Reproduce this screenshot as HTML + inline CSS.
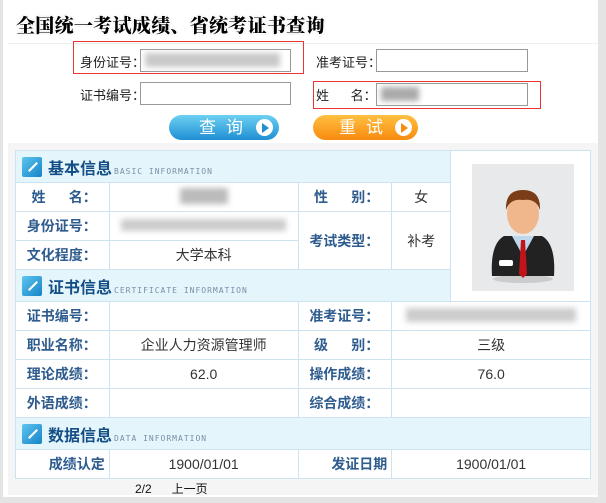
<!DOCTYPE html>
<html><head><meta charset="utf-8"><style>
*{margin:0;padding:0;box-sizing:border-box}
body{width:606px;height:503px;background:#e4e4e4;position:relative;overflow:hidden;font-family:"Liberation Sans","Noto Sans CJK SC",sans-serif;font-size:13px;color:#333}
.a{position:absolute}
.main{left:3px;top:0;width:595px;height:497px;background:#fff}
.title{left:16px;top:11px;font-size:19px;font-weight:900;color:#000;text-shadow:1px 1px 0 #fff,-1px -1px 0 #fff,1px -1px 0 #fff,-1px 1px 0 #fff,0 0 2px #888;font-family:"WenQuanYi Zen Hei","Noto Serif CJK SC",serif;white-space:nowrap;letter-spacing:0.3px}
.lbl{font-size:13px;color:#222;white-space:nowrap}
.inp{border:1px solid #999;background:#fff;height:23px}
.red{border:1px solid #e33 !important}
.blur{background:#c8c8c8;filter:blur(3px)}
.btn{height:25px;border-radius:13px;color:#fff;font-size:17px;letter-spacing:10px;line-height:25px}
.circ{position:absolute;top:4px;width:17px;height:17px;border-radius:50%;background:#fff}
.gray{left:8px;top:143px;width:590px;height:352px;background:#f5f5f5}
table{position:absolute;left:15px;top:150px;width:576px;border-collapse:collapse;background:#fff}
td{border:1px solid #cde3ef;height:29px;text-align:center;font-size:14px;color:#333}
td.l{color:#2e5c8e;font-weight:bold;text-align:right;padding-right:12px;font-size:14px}
tr.h td{background:#e4f6fb;height:32px;text-align:left;padding-left:6px}
.ico{display:inline-block;width:20px;height:20px;border-radius:2px;background:linear-gradient(135deg,#5fc6f0,#1583c8);vertical-align:middle;position:relative}
.ico:after{content:"";position:absolute;left:5px;top:9px;width:12px;height:2px;background:#fff;transform:rotate(-45deg)}
.ht{font-size:16px;font-weight:bold;color:#144e86;vertical-align:middle;margin-left:6px}
.hs{font-size:8px;color:#7a8ea8;letter-spacing:1px;vertical-align:-4px;margin-left:2px;font-family:"DejaVu Sans Mono",monospace}
</style></head><body>
<div class="a main"></div>
<div class="a title">全国统一考试成绩、省统考证书查询</div>
<div class="a" style="left:8px;top:43px;width:590px;height:1px;background:#eee"></div>

<div class="a red" style="left:73px;top:41px;width:231px;height:33px;border:1px solid #e33"></div>
<div class="a lbl" style="left:80px;top:52px">身份证号：</div>
<div class="a inp" style="left:140px;top:49px;width:151px"></div>
<div class="a blur" style="left:145px;top:53px;width:135px;height:14px"></div>
<div class="a lbl" style="left:316px;top:52px">准考证号：</div>
<div class="a inp" style="left:376px;top:49px;width:152px"></div>

<div class="a lbl" style="left:80px;top:85px">证书编号：</div>
<div class="a inp" style="left:140px;top:82px;width:151px"></div>
<div class="a red" style="left:313px;top:81px;width:228px;height:28px;border:1px solid #e33"></div>
<div class="a lbl" style="left:316px;top:85px">姓&nbsp;&nbsp;&nbsp;&nbsp;&nbsp;&nbsp;名：</div>
<div class="a inp" style="left:376px;top:83px;width:152px"></div>
<div class="a blur" style="left:381px;top:87px;width:38px;height:14px;background:#aaa"></div>

<div class="a btn" style="left:169px;top:115px;width:110px;background:linear-gradient(#6dd0f2,#1f8fd3);padding-left:30px">查询<div class="circ" style="left:87px"></div><div class="a" style="left:93px;top:8px;border-left:7px solid #1f8fd3;border-top:5px solid transparent;border-bottom:5px solid transparent"></div></div>
<div class="a btn" style="left:313px;top:115px;width:105px;background:linear-gradient(#ffc040,#f88a10);padding-left:26px">重试<div class="circ" style="left:82px"></div><div class="a" style="left:88px;top:8px;border-left:7px solid #f88a10;border-top:5px solid transparent;border-bottom:5px solid transparent"></div></div>

<div class="a gray"></div>
<table>
<colgroup><col style="width:94px"><col style="width:189px"><col style="width:94px"><col style="width:59px"><col style="width:140px"></colgroup>
<tr class="h"><td colspan="4"><span class="ico"></span><span class="ht">基本信息</span><span class="hs">BASIC INFORMATION</span></td>
<td rowspan="5" style="background:#fff;padding:0;position:relative">
<div style="position:absolute;left:21px;top:13px;width:102px;height:127px;background:#e8e9eb">
<svg width="102" height="127" viewBox="0 0 102 127">
<ellipse cx="51" cy="115" rx="30" ry="4" fill="#ccc"/>
<path d="M20 112 Q18 80 32 72 L70 72 Q84 80 82 112 Z" fill="#222"/>
<path d="M40 72 L51 92 L62 72 Z" fill="#bfd7ea"/>
<path d="M49 76 L53 76 L55 110 L51 114 L47 110 Z" fill="#c3141b"/>
<ellipse cx="51" cy="50" rx="16" ry="20" fill="#f0b78c"/>
<path d="M34 46 Q33 26 51 26 Q69 26 68 46 Q64 34 51 36 Q38 34 34 46 Z" fill="#7a3d18"/>
<rect x="27" y="96" width="14" height="6" rx="2" fill="#fff"/>
</svg></div></td></tr>
<tr><td class="l">姓&nbsp;&nbsp;&nbsp;&nbsp;&nbsp;&nbsp;名：</td><td><span style="display:inline-block;width:48px;height:16px;background:#bbb;filter:blur(3px)"></span></td><td class="l">性&nbsp;&nbsp;&nbsp;&nbsp;&nbsp;&nbsp;别：</td><td>女</td></tr>
<tr><td class="l">身份证号：</td><td><span style="display:inline-block;width:165px;height:12px;background:#ccc;filter:blur(3px)"></span></td><td class="l" rowspan="2">考试类型：</td><td rowspan="2">补考</td></tr>
<tr><td class="l">文化程度：</td><td>大学本科</td></tr>
<tr class="h"><td colspan="4"><span class="ico"></span><span class="ht">证书信息</span><span class="hs">CERTIFICATE INFORMATION</span></td></tr>
<tr><td class="l">证书编号：</td><td></td><td class="l">准考证号：</td><td colspan="2"><span style="display:inline-block;width:170px;height:14px;background:#ccc;filter:blur(3px)"></span></td></tr>
<tr><td class="l">职业名称：</td><td>企业人力资源管理师</td><td class="l">级&nbsp;&nbsp;&nbsp;&nbsp;&nbsp;&nbsp;别：</td><td colspan="2">三级</td></tr>
<tr><td class="l">理论成绩：</td><td>62.0</td><td class="l">操作成绩：</td><td colspan="2">76.0</td></tr>
<tr><td class="l">外语成绩：</td><td></td><td class="l">综合成绩：</td><td colspan="2"></td></tr>
<tr class="h"><td colspan="5"><span class="ico"></span><span class="ht">数据信息</span><span class="hs">DATA INFORMATION</span></td></tr>
<tr><td class="l" style="padding-right:4px">成绩认定</td><td>1900/01/01</td><td class="l" style="padding-right:4px">发证日期</td><td colspan="2">1900/01/01</td></tr>
</table>
<div class="a" style="left:135px;top:480px;font-size:12px;color:#111">2/2&nbsp;&nbsp;&nbsp;&nbsp;&nbsp;&nbsp;上一页</div>
</body></html>
